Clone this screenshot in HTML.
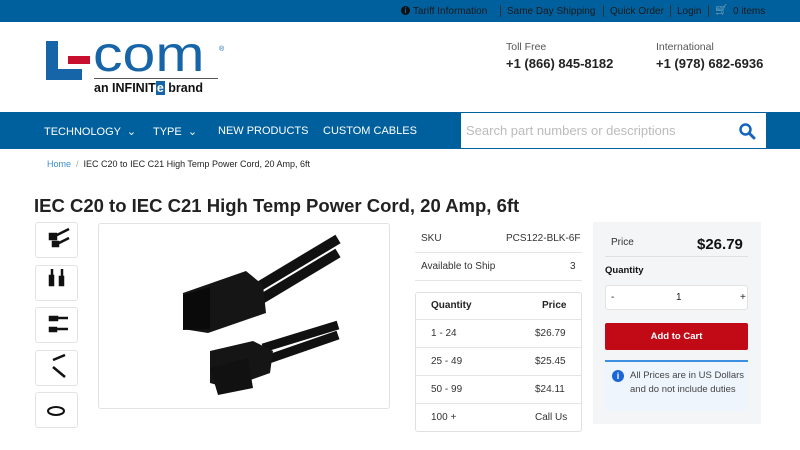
<!DOCTYPE html>
<html><head><meta charset="utf-8"><style>
*{margin:0;padding:0;box-sizing:border-box}
body{width:800px;height:450px;overflow:hidden;background:#fff;font-family:"Liberation Sans",Arial,sans-serif;color:#222;position:relative}
.abs{position:absolute}
.top{left:0;top:0;width:800px;height:22px;background:#00609e;color:#1a1a1a;font-size:10px}
.top span{position:absolute;top:6px;white-space:nowrap}
.sep{border-left:1px solid #333;height:12px;top:5px!important}
.nav{left:0;top:112px;width:800px;height:37px;background:#00609e;color:#fff;font-size:11px}
.nav span{position:absolute;top:13px;white-space:nowrap}
.thumb{left:35px;width:43px;height:36px;border:1px solid #e3e3e3;border-radius:3px;background:#fff}
.row{font-size:10px;color:#333;white-space:nowrap}
</style></head><body>
<div class="abs top">
 <span style="left:401px;top:6px;width:9px;height:9px;border-radius:50%;background:#111;color:#00609e;font-size:8px;font-weight:bold;text-align:center;line-height:9px">i</span>
 <span style="left:413px">Tariff Information</span><span class="sep" style="left:500px"></span>
 <span style="left:507px">Same Day Shipping</span><span class="sep" style="left:603px"></span>
 <span style="left:610px">Quick Order</span><span class="sep" style="left:670px"></span>
 <span style="left:677px">Login</span><span class="sep" style="left:708px"></span>
 <span style="left:715px;top:5px">🛒</span><span style="left:733px">0 items</span>
</div>
<!-- logo -->
<div class="abs" style="left:46px;top:41px;width:12px;height:39px;background:#1565a8"></div>
<div class="abs" style="left:46px;top:69px;width:36px;height:11px;background:#1565a8"></div>
<div class="abs" style="left:68px;top:56px;width:22px;height:8px;background:#c8102e"></div>
<div class="abs" style="left:93px;top:28px;font-size:50px;color:#1565a8;letter-spacing:0px;line-height:52px;transform:scaleX(1.18);transform-origin:left">com</div>
<div class="abs" style="left:219px;top:46px;font-size:7px;color:#1565a8">®</div>
<div class="abs" style="left:94px;top:78px;width:124px;height:1px;background:#555"></div>
<div class="abs" style="left:94px;top:81px;font-size:12.5px;font-weight:bold;color:#111">an INFINIT<span style="background:#1565a8;color:#fff;padding:0 1px">e</span> brand</div>
<div class="abs" style="left:506px;top:41px;font-size:10.5px;color:#555">Toll Free</div>
<div class="abs" style="left:506px;top:56px;font-size:13px;font-weight:bold;color:#222">+1 (866) 845-8182</div>
<div class="abs" style="left:656px;top:41px;font-size:10.5px;color:#555">International</div>
<div class="abs" style="left:656px;top:56px;font-size:13px;font-weight:bold;color:#222">+1 (978) 682-6936</div>
<div class="abs nav">
 <span style="left:44px">TECHNOLOGY &nbsp;⌄</span>
 <span style="left:153px">TYPE &nbsp;⌄</span>
 <span style="left:218px">NEW PRODUCTS</span>
 <span style="left:323px">CUSTOM CABLES</span>
 <div class="abs" style="left:461px;top:1px;width:305px;height:35px;background:#fff"></div>
 <span style="left:466px;top:11px;color:#bbb;font-size:13px">Search part numbers or descriptions</span>
 <svg class="abs" style="left:738px;top:10px" width="18" height="18" viewBox="0 0 18 18"><circle cx="7.5" cy="7.5" r="5" fill="none" stroke="#1565c0" stroke-width="2.5"/><line x1="11" y1="11" x2="16" y2="16" stroke="#1565c0" stroke-width="3" stroke-linecap="round"/></svg>
</div>
<div class="abs" style="left:47px;top:159px;font-size:9px;color:#222"><span style="color:#3a8fd0">Home</span> <span style="color:#aaa">&nbsp;/&nbsp;</span> IEC C20 to IEC C21 High Temp Power Cord, 20 Amp, 6ft</div>
<div class="abs" style="left:34px;top:195px;font-size:18.5px;font-weight:bold;color:#222;white-space:nowrap">IEC C20 to IEC C21 High Temp Power Cord, 20 Amp, 6ft</div>
<div class="abs thumb" style="top:222px"></div><div class="abs thumb" style="top:265px"></div><div class="abs thumb" style="top:307px"></div><div class="abs thumb" style="top:350px"></div><div class="abs thumb" style="top:392px"></div>
<svg class="abs" style="left:35px;top:222px" width="43" height="208">
<g stroke="#111" stroke-width="2.5" fill="#111"><line x1="20" y1="14" x2="34" y2="7"/><line x1="22" y1="22" x2="34" y2="16"/><rect x="15" y="12" width="6" height="5"/><rect x="18" y="20" width="5" height="4"/>
<rect x="15" y="54" width="3" height="9"/><rect x="25" y="55" width="3" height="8"/><line x1="17" y1="54" x2="17" y2="47"/><line x1="27" y1="55" x2="27" y2="47"/>
<rect x="15" y="95" width="7" height="3"/><line x1="22" y1="96" x2="33" y2="96"/><rect x="15" y="106" width="6" height="3"/><line x1="21" y1="107" x2="33" y2="107"/>
<line x1="18" y1="138" x2="30" y2="133"/><line x1="18" y1="145" x2="30" y2="155"/></g>
<ellipse cx="21" cy="189" rx="8" ry="4" fill="none" stroke="#111" stroke-width="2"/></svg>
<div class="abs" style="left:98px;top:223px;width:292px;height:186px;border:1px solid #e3e3e3;border-radius:3px"></div>
<svg class="abs" style="left:98px;top:223px" width="292" height="186">
<path d="M150 70 L240 16 M150 84 L240 30" stroke="#111" stroke-width="10" fill="none"/>
<path d="M85 70 L148 48 L165 62 L168 90 L110 110 L85 106 Z" fill="#151515"/>
<path d="M85 72 L112 64 L112 106 L85 107 Z" fill="#0a0a0a"/>
<path d="M165 125 L240 102 M165 138 L240 112" stroke="#111" stroke-width="9"/>
<path d="M112 128 L155 118 L175 128 L172 150 L130 165 L112 160 Z" fill="#151515"/>
<path d="M112 145 L150 135 L155 165 L120 172 Z" fill="#111"/>
</svg>
<div class="abs" style="left:415px;top:225px;width:167px;height:28px;border-bottom:1px solid #e5e5e5"></div>
<div class="abs row" style="left:421px;top:233px">SKU</div><div class="abs row" style="left:506px;top:233px">PCS122-BLK-6F</div>
<div class="abs" style="left:415px;top:253px;width:167px;height:28px;border-bottom:1px solid #e5e5e5"></div>
<div class="abs row" style="left:421px;top:261px">Available to Ship</div><div class="abs row" style="left:570px;top:261px">3</div>
<div class="abs" style="left:415px;top:292px;width:167px;height:140px;border:1px solid #e0e0e0;border-radius:3px"></div>
<div class="abs" style="left:416px;top:319px;width:165px;border-top:1px solid #e5e5e5"></div>
<div class="abs" style="left:416px;top:347px;width:165px;border-top:1px solid #e5e5e5"></div>
<div class="abs" style="left:416px;top:375px;width:165px;border-top:1px solid #e5e5e5"></div>
<div class="abs" style="left:416px;top:403px;width:165px;border-top:1px solid #e5e5e5"></div>
<div class="abs row" style="left:431px;top:300px;font-weight:bold;color:#222">Quantity</div><div class="abs row" style="left:542px;top:300px;font-weight:bold;color:#222">Price</div>
<div class="abs row" style="left:431px;top:328px">1 - 24</div><div class="abs row" style="left:535px;top:328px">$26.79</div>
<div class="abs row" style="left:431px;top:356px">25 - 49</div><div class="abs row" style="left:535px;top:356px">$25.45</div>
<div class="abs row" style="left:431px;top:384px">50 - 99</div><div class="abs row" style="left:535px;top:384px">$24.11</div>
<div class="abs row" style="left:431px;top:412px">100 +</div><div class="abs row" style="left:535px;top:412px">Call Us</div>
<div class="abs" style="left:593px;top:222px;width:168px;height:202px;background:#f4f5f7"></div>
<div class="abs row" style="left:611px;top:237px">Price</div>
<div class="abs" style="left:697px;top:236px;font-size:15px;font-weight:bold;color:#111">$26.79</div>
<div class="abs" style="left:605px;top:256px;width:143px;border-top:1px solid #e0e0e0"></div>
<div class="abs" style="left:605px;top:265px;font-size:9.5px;font-weight:bold;color:#111">Quantity</div>
<div class="abs" style="left:605px;top:285px;width:143px;height:25px;background:#fff;border:1px solid #e3e3e3;border-radius:3px;font-size:10px"><span class="abs" style="left:5px;top:6px">-</span><span class="abs" style="left:70px;top:6px">1</span><span class="abs" style="left:134px;top:6px">+</span></div>
<div class="abs" style="left:605px;top:323px;width:143px;height:27px;background:#c20a17;border-radius:2px;color:#fff;font-size:9.5px;font-weight:bold;text-align:center;line-height:27px">Add to Cart</div>
<div class="abs" style="left:605px;top:360px;width:143px;height:51px;background:#eef5fd;border-top:2px solid #3a8fe0"></div>
<div class="abs" style="left:612px;top:370px;width:12px;height:12px;border-radius:50%;background:#1a66d8;color:#fff;font-size:9px;font-weight:bold;text-align:center;line-height:12px">i</div>
<div class="abs" style="left:630px;top:369px;font-size:9.5px;color:#444;line-height:14px;white-space:nowrap">All Prices are in US Dollars<br>and do not include duties</div>
</body></html>
